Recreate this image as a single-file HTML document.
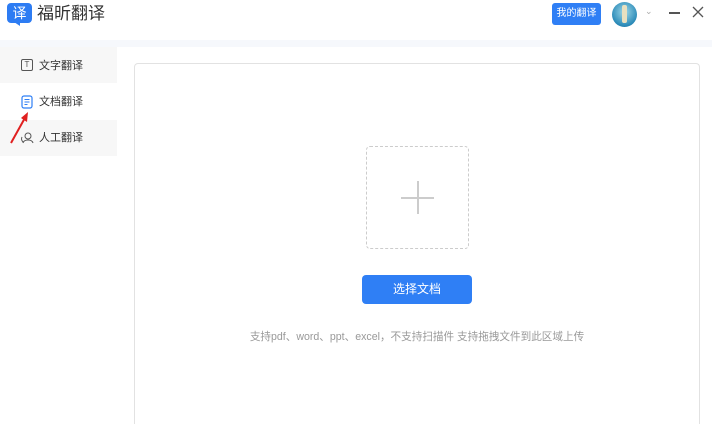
<!DOCTYPE html>
<html><head><meta charset="utf-8"><style>
*{margin:0;padding:0;box-sizing:border-box}
html,body{width:712px;height:424px;overflow:hidden}
body{background:#fff;font-family:"Liberation Sans","Noto Sans CJK SC",sans-serif;position:relative}
.a{position:absolute}
</style></head><body>
<div class="a" style="left:0;top:40px;width:712px;height:7px;background:#f6f8fc"></div>
<div class="a" style="left:7px;top:3px;width:25px;height:20px;background:#2d7cf3;border-radius:4px;color:#fff;font-size:14px;line-height:20px;text-align:center">译</div>
<div class="a" style="left:14px;top:22px;width:6px;height:4px;background:#2d7cf3;clip-path:polygon(0 0,100% 0,100% 100%)"></div>
<div class="a" style="left:37px;top:3px;font-size:17px;color:#333;line-height:22px">福昕翻译</div>
<div class="a" style="left:552px;top:3px;width:49px;height:22px;background:#2f7ff5;border-radius:3px;color:#fff;font-size:10px;line-height:22px;text-align:center">我的翻译</div>
<div class="a" style="left:612px;top:2px;width:25px;height:25px;border-radius:50%;background:radial-gradient(circle at 50% 40%,#9fd8e8,#2a8ab8 70%,#1a5a8a)"></div>
<div class="a" style="left:622px;top:5px;width:5px;height:18px;background:#e8e0c0;border-radius:2px"></div>
<div class="a" style="left:645px;top:6px;font-size:9px;color:#aaa">⌄</div>
<div class="a" style="left:669px;top:12px;width:11px;height:1.5px;background:#555"></div>
<svg class="a" style="left:692px;top:6px" width="12" height="12"><path d="M1 1L11 11M11 1L1 11" stroke="#555" stroke-width="1.3"/></svg>
<div class="a" style="left:0;top:47px;width:117px;height:36px;background:#f7f7f7"></div>
<div class="a" style="left:0;top:120px;width:117px;height:36px;background:#f7f7f7"></div>
<div class="a" style="left:21px;top:59px;width:12px;height:12px;border:1px solid #555;border-radius:2px;font-size:8px;line-height:10px;text-align:center;color:#555">T</div>
<div class="a" style="left:39px;top:59px;font-size:11px;color:#333;line-height:15px">文字翻译</div>
<svg class="a" style="left:21px;top:95px" width="12" height="14"><rect x="1" y="1" width="10" height="12" rx="2" fill="none" stroke="#2f7ff5" stroke-width="1.2"/><path d="M3.5 4.5h5M3.5 7h5M3.5 9.5h3" stroke="#2f7ff5"/></svg>
<div class="a" style="left:39px;top:95px;font-size:11px;color:#333;line-height:15px">文档翻译</div>
<svg class="a" style="left:20px;top:131px" width="14" height="14"><circle cx="8" cy="5" r="3" fill="none" stroke="#555"/><path d="M3 12c1-4 9-4 10 0M2 6c-1 2 0 4 1 5" fill="none" stroke="#555"/></svg>
<div class="a" style="left:39px;top:131px;font-size:11px;color:#333;line-height:15px">人工翻译</div>
<svg class="a" style="left:8px;top:110px" width="24" height="36"><path d="M3 33L18 6" stroke="#e02020" stroke-width="2"/><path d="M13 8L20 2L19 12Z" fill="#e02020"/></svg>
<div class="a" style="left:134px;top:63px;width:566px;height:361px;border:1px solid #e2e2e2;border-bottom:none;border-radius:4px 4px 0 0"></div>
<div class="a" style="left:366px;top:146px;width:103px;height:103px;border:1px dashed #ccc;border-radius:4px"></div>
<div class="a" style="left:401px;top:197px;width:33px;height:1.5px;background:#ccc"></div>
<div class="a" style="left:417px;top:181px;width:1.5px;height:33px;background:#ccc"></div>
<div class="a" style="left:362px;top:275px;width:110px;height:29px;background:#2f7ff5;border-radius:4px;color:#fff;font-size:12px;line-height:29px;text-align:center">选择文档</div>
<div class="a" style="left:134px;top:330px;width:566px;text-align:center;font-size:10.6px;color:#999;line-height:14px">支持pdf、word、ppt、excel，不支持扫描件 支持拖拽文件到此区域上传</div>
</body></html>
